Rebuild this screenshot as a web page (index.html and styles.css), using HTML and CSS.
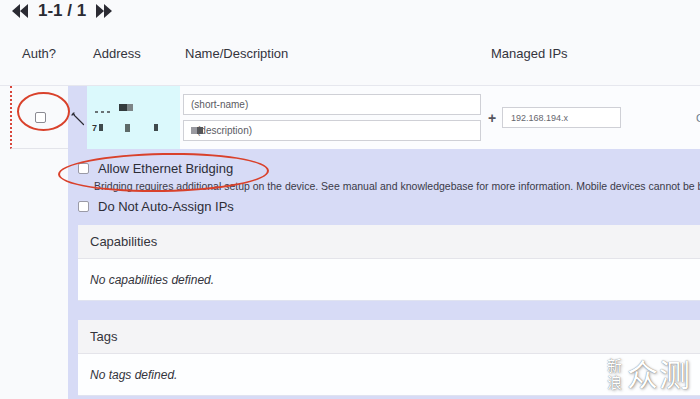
FILE: index.html
```html
<!DOCTYPE html>
<html lang="en">
<head>
  <meta charset="UTF-8">
  <meta name="viewport" content="width=device-width, initial-scale=1.0">
  <title>Network Members</title>
  <link rel="stylesheet" href="styles.css">
</head>
<body>

  <div class="pager">
    <svg class="pg-icon" viewBox="0 0 16 14" width="16" height="14"><path d="M8 0 L0 7 L8 14 Z M16 0 L8 7 L16 14 Z" fill="#2b2b33"/></svg>
    <span class="pg-text">1-1 / 1</span>
    <svg class="pg-icon" viewBox="0 0 16 14" width="16" height="14"><path d="M0 0 L8 7 L0 14 Z M8 0 L16 7 L8 14 Z" fill="#2b2b33"/></svg>
  </div>

  <div class="grid head">
    <div class="c-auth">Auth?</div>
    <div></div>
    <div class="c-addr">Address</div>
    <div class="c-name">Name/Description</div>
    <div class="c-ip">Managed IPs</div>
  </div>

  <div class="grid member">
    <div class="c-auth cell-auth"><span class="box"></span></div>
    <div class="cell-tool">
      <svg viewBox="0 0 14 14" width="14" height="14"><path d="M2 1.5 L3.5 3 M1 3 L3 1 M3 3 L12.5 12.5" stroke="#2b2b33" stroke-width="1.2" fill="none" stroke-linecap="round"/></svg>
    </div>
    <div class="cell-addr">
      <div class="blobs top"><i class="b dots"></i><i class="b big"></i></div>
      <div class="blobs bottom"><span class="seven">7</span><i class="b sm"></i><i class="b sm2"></i><i class="b sm"></i></div>
    </div>
    <div class="cell-name">
      <div class="field">(short-name)</div>
      <div class="field"><i class="b mask"></i>(description)</div>
    </div>
    <div class="cell-ip">
      <span class="plus">+</span>
      <div class="field ip">192.168.194.x</div>
      <span class="edge">C</span>
    </div>
  </div>

  <div class="detail">
    <label class="opt"><span class="box"></span>Allow Ethernet Bridging</label>
    <p class="hint">Bridging requires additional setup on the device. See manual and knowledgebase for more information. Mobile devices cannot be bridged.</p>
    <label class="opt"><span class="box"></span>Do Not Auto-Assign IPs</label>

    <div class="panel">
      <div class="panel-head">Capabilities</div>
      <div class="panel-body">No capabilities defined.</div>
    </div>
    <div class="panel">
      <div class="panel-head">Tags</div>
      <div class="panel-body">No tags defined.</div>
    </div>
  </div>

  <div class="ring ring-auth"></div>
  <div class="ring ring-bridge"></div>

  <div class="mark"><span class="mark-small">新<br>浪</span><span class="mark-big">众测</span></div>

</body>
</html>
```

FILE: styles.css
```css
html, body { margin: 0; height: 100%; overflow: hidden; }
body {
  background: #f9fafc;
  font-family: "Liberation Sans", Arial, sans-serif;
  color: #34343c;
  position: relative;
}

.pager { height: 22px; display: flex; align-items: center; gap: 8px; padding-left: 12px; }
.pager .pg-icon { display: block; }
.pg-text { font-size: 17px; font-weight: bold; color: #2b2b33; margin: 0 2px; }

.grid { display: grid; grid-template-columns: 68px 19px 93px 305px 1fr; }
.head { height: 63px; align-items: center; font-size: 13px; border-bottom: 1px solid #e6e7ee; }
.head .c-auth { padding-left: 22px; }
.head .c-addr { padding-left: 6px; }
.head .c-name { padding-left: 5px; }
.head .c-ip { padding-left: 6px; }

.member { height: 63px; }
.cell-auth {
  margin-left: 10px;
  border-left: 2px dotted #d8453a;
  border-bottom: 1px solid #e3e4ea;
  display: flex; align-items: center; justify-content: center;
}
.box {
  display: inline-block; width: 9px; height: 9px;
  border: 1px solid #8a8a92; border-radius: 2px; background: #fff;
}
.cell-tool { background: #d7dbf6; display: flex; align-items: center; justify-content: center; padding-top: 2px; }
.cell-addr {
  background: #dbf9fc;
  display: flex; flex-direction: column; justify-content: center; gap: 10px;
  padding-left: 5px;
}
.blobs { display: flex; align-items: center; gap: 8px; }
.blobs.top { padding-left: 3px; }
.b { display: inline-block; background: #3f4a4c; }
.b.dots { width: 16px; height: 2px; background: repeating-linear-gradient(90deg, #6a7375 0 3px, transparent 3px 6px); margin-top: 8px; }
.b.big { width: 14px; height: 7px; background: linear-gradient(90deg, #333b3d 60%, #7d8587 60%); }
.bottom { gap: 0; font-size: 9px; font-weight: bold; color: #333; }
.seven { margin-right: 2px; }
.b.sm { width: 6px; height: 7px; margin-right: 22px; }
.b.sm2 { width: 6px; height: 8px; background: #5d6a68; margin-right: 24px; }

.cell-name { background: #fbfcfe; display: flex; flex-direction: column; justify-content: center; gap: 5px; padding-left: 3px; }
.field {
  box-sizing: border-box; width: 298px; height: 21px;
  border: 1px solid #cfd0d6; background: #fff;
  font-size: 10px; color: #5a5a62;
  display: flex; align-items: center; padding-left: 7px;
}
.b.mask { width: 12px; height: 7px; background: linear-gradient(90deg, #9a9aa0 50%, #555 50%); margin-right: -6px; }
.cell-ip { background: #fbfcfe; display: flex; align-items: center; padding-left: 3px; }
.plus { font-size: 14px; font-weight: bold; color: #55555d; width: 14px; }
.field.ip { width: 119px; font-size: 9px; color: #66666e; padding-left: 8px; }
.edge { margin-left: auto; font-size: 11px; color: #6c7c8c; margin-right: -4px; }

.detail {
  margin-left: 68px; height: 250px;
  background: #d7dbf6;
  padding: 12px 0 0 10px;
}
.opt { display: flex; align-items: center; gap: 9px; font-size: 13px; color: #2d2d36; height: 14px; }
.opt .box { border-color: #9a9aa6; }
.hint { margin: 5px 0 7px 16px; font-size: 10.5px; color: #3a3a48; white-space: nowrap; }
.panel { background: #fff; margin-top: 19px; }
.detail .opt + .panel { margin-top: 12px; }
.panel-head {
  height: 34px; box-sizing: border-box; background: #f4f4f6;
  border-bottom: 1px solid #e4e4ea;
  display: flex; align-items: center; padding-left: 12px; font-size: 13px;
}
.panel-body { height: 42px; box-sizing: border-box; display: flex; align-items: center; padding-left: 12px; font-size: 12px; font-style: italic; background: #fdfeff; border-bottom: 1px solid #e0e3f0; }

.ring { position: absolute; border: 2px solid #d9412b; border-radius: 50%; box-sizing: border-box; }
.ring-auth { left: 17px; top: 92px; width: 53px; height: 39px; }
.ring-bridge { left: 58px; top: 153px; width: 211px; height: 39px; transform: rotate(-1deg); }

.mark {
  position: absolute; right: 9px; bottom: 9px;
  display: flex; align-items: center; gap: 5px;
  color: #fff; text-shadow: 0 0 1px rgba(0,0,0,0.6), 1px 1px 3px rgba(0,0,0,0.35);
  font-family: "Noto Sans CJK SC", sans-serif;
}
.mark-small { font-size: 15px; line-height: 17px; }
.mark-big { font-size: 31px; line-height: 34px; font-weight: 400; letter-spacing: 1px; }
```
